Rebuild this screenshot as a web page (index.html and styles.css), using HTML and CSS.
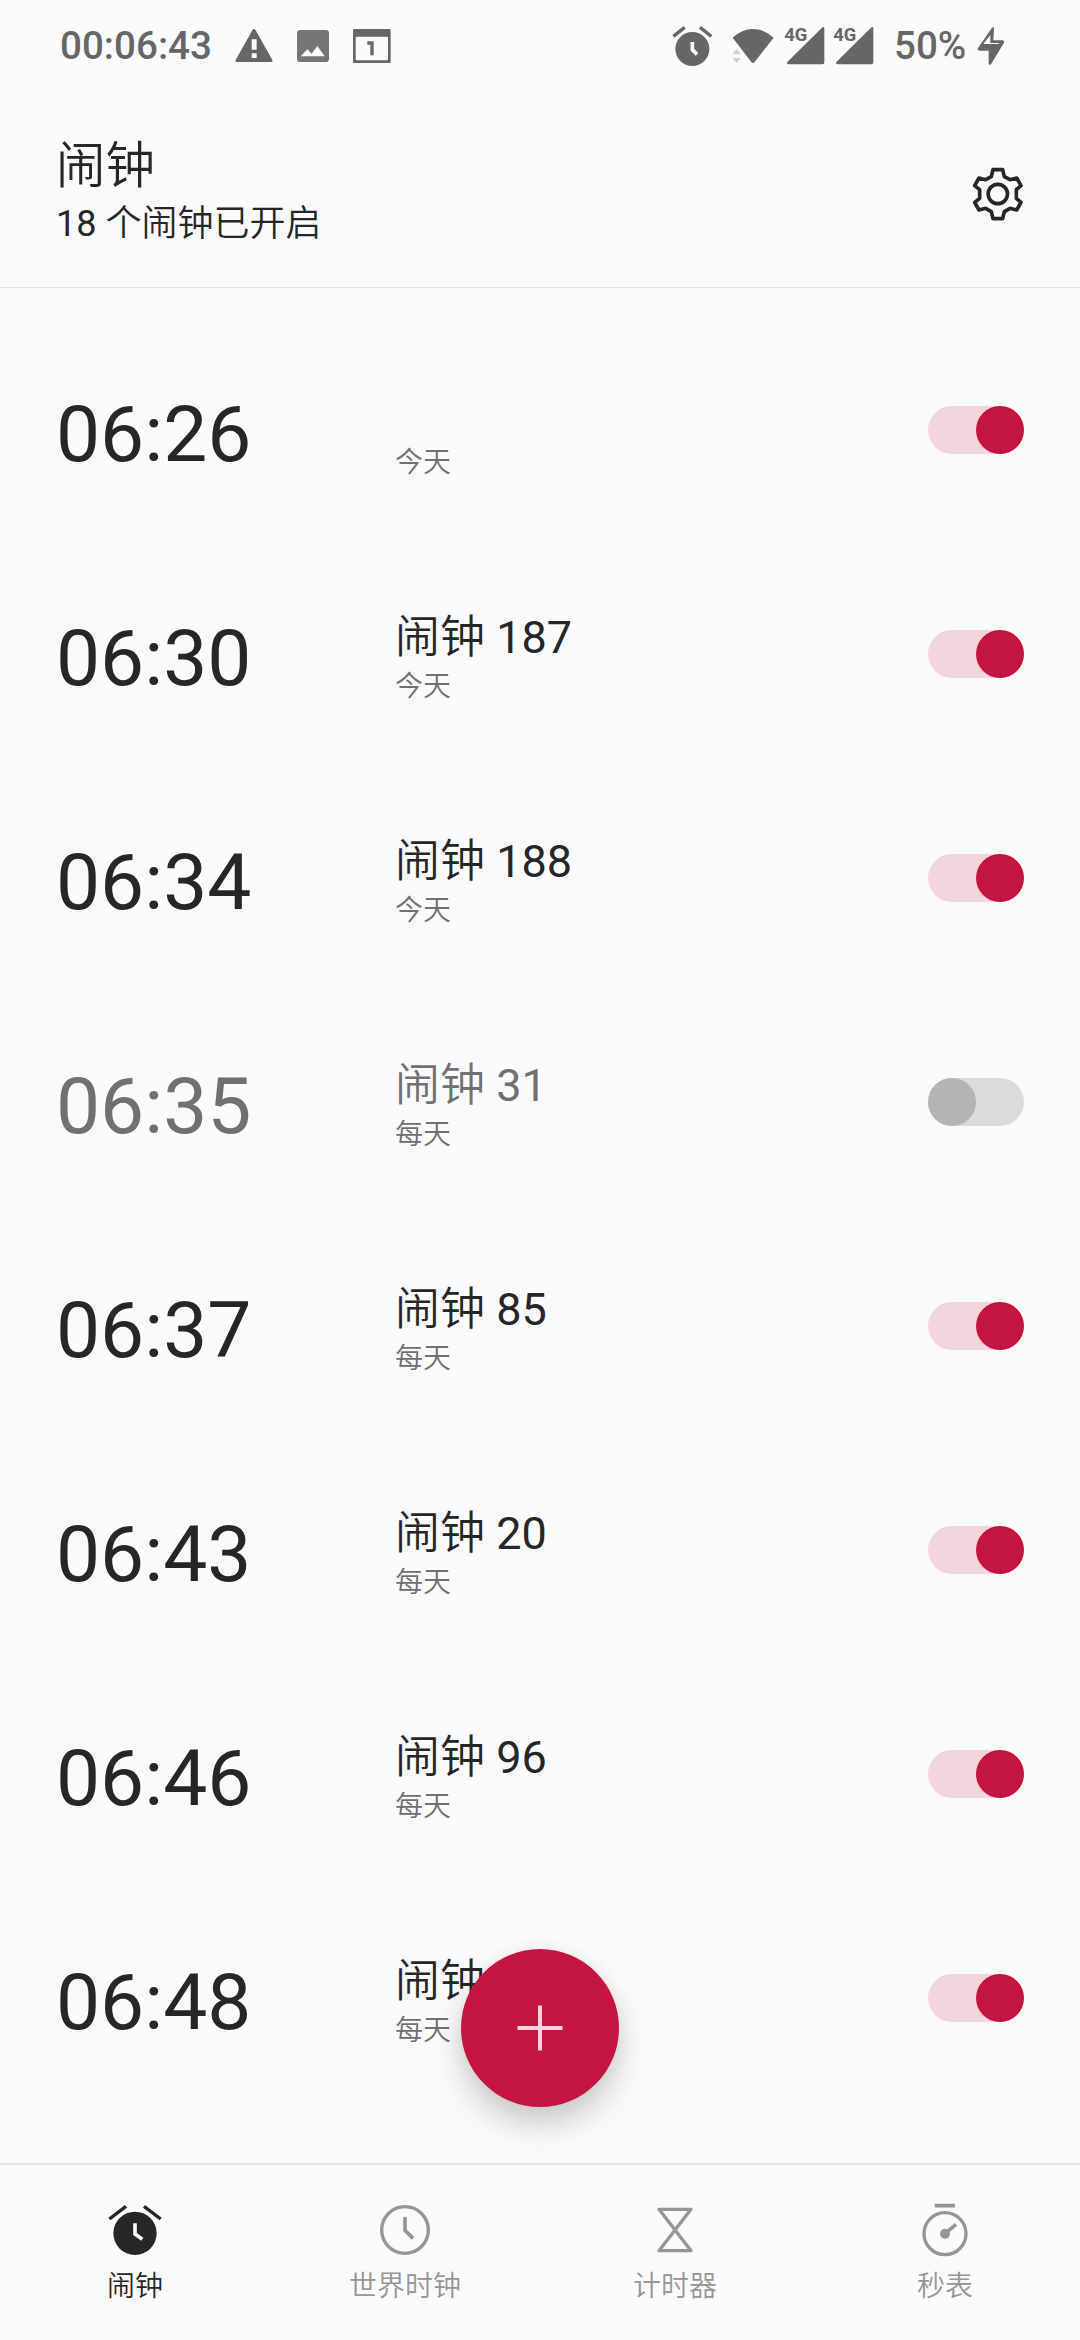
FILE: index.html
```html
<!DOCTYPE html>
<html lang="zh-CN">
<head>
<meta charset="utf-8">
<title>闹钟</title>
<link rel="stylesheet" href="styles.css">
</head>
<body>
<div class="screen">
  <div class="status">
    <span class="status-time">00:06:43</span>
    <svg class="warn" width="38" height="90" viewBox="584 0 114 270"><path fill-rule="evenodd" d="M641 87q3 0 5 4l50 89q2 6-4 6H590q-6 0-4-6l50-89q2-4 5-4zM634 118v31h15v-31zM634 160v14h15v-14z"/></svg>
    <svg class="photo" width="32" height="90" viewBox="771 0 96 270"><path fill-rule="evenodd" d="M781 90h76q10 0 10 10v76q0 10-10 10h-76q-10 0-10-10v-76q0-10 10-10zM782 169h72l-22-31-17 23-13-13z"/></svg>
    <svg class="cal" width="38" height="90" viewBox="940 0 114 270"><path fill-rule="evenodd" d="M944 87h105q4 0 4 4v94q0 4-4 4H944q-4 0-4-4V91q0-4 4-4zM952 110q-4 0-4 4v63q0 4 4 4h89q4 0 4-4v-63q0-4-4-4zM983 124h19v42h-10v-32h-9z"/></svg>
    <div class="status-right">
      <svg class="s-alarm" width="42" height="90" viewBox="62 0 126 270"><circle cx="126" cy="147" r="51"/><path class="s-bell" d="M69 109l34-27M149 82l34 27"/><path class="s-hand" d="M126 126v23l14 14"/></svg>
      <svg class="s-wifi" width="44" height="90" viewBox="240 0 132 270"><path d="M245 113q28-26 61-26t62 26l-57 73q-5 6-10 0z"/><path class="faint" d="M257 147l13 15h-26zM244 174h26l-13 15z"/></svg>
      <svg class="s-sig" width="42" height="90" viewBox="399 0 126 270"><path d="M409 186l104-103q6-5 7 2v102q0 6-6 6H413q-7-1-4-7z"/><text x="400" y="123" textLength="69" lengthAdjust="spacingAndGlyphs">4G</text></svg>
      <svg class="s-sig" width="42" height="90" viewBox="399 0 126 270"><path d="M409 186l104-103q6-5 7 2v102q0 6-6 6H413q-7-1-4-7z"/><text x="400" y="123" textLength="69" lengthAdjust="spacingAndGlyphs">4G</text></svg>
      <span class="battery">50%</span>
      <svg class="s-bolt" width="28" height="90" viewBox="980 0 84 270"><path fill-rule="evenodd" d="M1025 83q5-4 6 2l-2 36h28q7 2 3 9l-37 61q-6 7-8 0v-39h-28q-7-2-4-8zM1020 105l-21 27h44l6-3h-29z"/></svg>
    </div>
  </div>

  <header class="header">
    <div>
      <h1 class="title">闹钟</h1>
      <p class="subtitle">18 <span class="han">个闹钟已开启</span></p>
    </div>
    <svg class="gear" width="54" height="56" viewBox="92 79 162 168"><path d="M158 90h29l5 21 17 9 20-5 13 23-14 12v26l14 12-13 23-20-5-17 10-5 21h-29l-5-21-17-10-20 5-13-23 15-12v-26l-15-12 13-23 20 5 17-9z"/><circle cx="172.500" cy="163" r="29"/></svg>
  </header>

  <main class="list">
    <div class="row"><span class="time">06:26</span><div class="info"><div class="label"></div><div class="repeat">今天</div></div><span class="toggle"></span></div>
    <div class="row"><span class="time">06:30</span><div class="info"><div class="label"><span class="han">闹钟</span> 187</div><div class="repeat">今天</div></div><span class="toggle"></span></div>
    <div class="row"><span class="time">06:34</span><div class="info"><div class="label"><span class="han">闹钟</span> 188</div><div class="repeat">今天</div></div><span class="toggle"></span></div>
    <div class="row off"><span class="time">06:35</span><div class="info"><div class="label"><span class="han">闹钟</span> 31</div><div class="repeat">每天</div></div><span class="toggle"></span></div>
    <div class="row"><span class="time">06:37</span><div class="info"><div class="label"><span class="han">闹钟</span> 85</div><div class="repeat">每天</div></div><span class="toggle"></span></div>
    <div class="row"><span class="time">06:43</span><div class="info"><div class="label"><span class="han">闹钟</span> 20</div><div class="repeat">每天</div></div><span class="toggle"></span></div>
    <div class="row"><span class="time">06:46</span><div class="info"><div class="label"><span class="han">闹钟</span> 96</div><div class="repeat">每天</div></div><span class="toggle"></span></div>
    <div class="row"><span class="time">06:48</span><div class="info"><div class="label"><span class="han">闹钟</span></div><div class="repeat">每天</div></div><span class="toggle"></span></div>
  </main>

  <button class="fab" aria-label="添加"><svg width="46" height="46" viewBox="0 0 46 46"><path d="M23 .5v45M.5 23h45"/></svg></button>

  <nav class="nav">
    <div class="tab active">
      <svg width="60" height="60" viewBox="194 150 180 180"><circle class="solid" cx="284" cy="250" r="65"/><path class="bell" d="M207 207l50-38M311 169l50 38"/><path class="cut" d="M284 220v32l22 16"/></svg>
      <span>闹钟</span>
    </div>
    <div class="tab">
      <svg width="60" height="60" viewBox="1005 150 180 180"><circle cx="1095" cy="240" r="70"/><path class="hand" d="M1095 201v40l24 24"/></svg>
      <span>世界时钟</span>
    </div>
    <div class="tab">
      <svg width="60" height="60" viewBox="195 150 180 180"><path d="M237 178h96L237 302h96z"/></svg>
      <span>计时器</span>
    </div>
    <div class="tab">
      <svg width="60" height="60" viewBox="1004 150 180 180"><circle cx="1094" cy="251" r="63"/><path class="hand" d="M1063 167h61M1094 251l33-28"/><circle class="solid" cx="1094" cy="251" r="15"/></svg>
      <span>秒表</span>
    </div>
  </nav>
</div>
</body>
</html>
```
FILE: styles.css
```css
* { box-sizing: border-box; }

body {
  margin: 0;
  background: #fafafa;
  color: #262626;
  font-family: Roboto, "Noto Sans CJK SC", sans-serif;
}

.screen {
  position: relative;
  display: flex;
  flex-direction: column;
  width: 1080px;
  height: 2340px;
  overflow: hidden;
  background: #fafafa;
}

.han { font-weight: 350; }

/* status bar */
.status {
  display: flex;
  flex: none;
  height: 92px;
  padding: 0 75px 0 60px;
  color: #666;
  fill: #666;
  font-size: 38.6px;
  font-weight: 500;
  line-height: 92px;
}
.status svg { flex: none; display: block; }
.status-time { width: 175px; white-space: nowrap; }
.photo { margin-left: 24px; fill: #757575; }
.cal { margin-left: 24px; }
.status-right { display: flex; margin-left: auto; }
.s-bell { fill: none; stroke: #666; stroke-width: 10; }
.s-hand { fill: none; stroke: #fafafa; stroke-width: 11; }
.s-wifi { margin-left: 18px; }
.faint { fill: #cfcfcf; }
.s-sig { margin-left: 9px; }
.s-sig + .s-sig { margin-left: 7px; }
.s-sig text { font-size: 57px; font-weight: 700; }
.battery { width: 83px; margin-left: 19px; white-space: nowrap; }

/* header */
.header {
  display: flex;
  flex: none;
  justify-content: space-between;
  height: 196px;
  padding: 44px 55px 0 56px;
  border-bottom: 1px solid #e2e2e2;
}
.title { margin: 0; font-size: 49.500px; font-weight: 350; line-height: 60px; }
.subtitle { margin: 6px 0 0; font-size: 36px; line-height: 44px; }
.gear {
  margin-top: 30px;
  fill: none;
  stroke: #262626;
  stroke-width: 11;
  stroke-linejoin: round;
}

/* alarms */
.list { flex: 1; padding-top: 30px; }
.row { display: flex; height: 224px; padding: 0 56px; }
.time {
  width: 339px;
  padding-top: 4px;
  font-size: 78.5px;
  line-height: 224px;
}
.info { flex: 1; padding-top: 70px; }
.label { height: 52px; font-size: 45px; line-height: 52px; }
.repeat {
  margin-top: 5px;
  color: #707070;
  font-size: 28px;
  font-weight: 350;
  line-height: 36px;
}
.toggle {
  display: flex;
  justify-content: flex-end;
  width: 96px;
  height: 48px;
  margin-top: 88px;
  border-radius: 24px;
  background: #f2d5dd;
}
.toggle::before {
  content: "";
  width: 48px;
  height: 48px;
  border-radius: 50%;
  background: #c41440;
}
.off .time, .off .label { color: #707070; }
.off .toggle { justify-content: flex-start; background: #dbdbdb; }
.off .toggle::before { background: #b4b4b4; }

/* floating button */
.fab {
  position: absolute;
  left: 461px;
  top: 1949px;
  display: grid;
  place-items: center;
  width: 158px;
  height: 158px;
  padding: 0;
  border: 0;
  border-radius: 50%;
  background: #c41440;
  box-shadow: 0 18px 30px rgba(0, 0, 0, .18), 0 0 18px rgba(0, 0, 0, .05);
}
.fab path { stroke: #fbd3dd; stroke-width: 4; }

/* bottom tabs */
.nav {
  display: grid;
  grid-template-columns: repeat(4, 1fr);
  flex: none;
  height: 177px;
  border-top: 2px solid #e4e4e4;
}
.tab {
  display: flex;
  flex-direction: column;
  align-items: center;
  padding-top: 35px;
  color: #959595;
  font-size: 28px;
  font-weight: 350;
  line-height: 36px;
}
.tab span { margin-top: 9px; }
.tab svg {
  fill: none;
  stroke: currentColor;
  stroke-width: 10;
  stroke-linejoin: round;
}
.tab .solid { fill: currentColor; stroke: none; }
.tab .hand { stroke-width: 11; }
.tab .cut { stroke: #fafafa; stroke-width: 11; stroke-linejoin: miter; }
.active { color: #262626; }
```
